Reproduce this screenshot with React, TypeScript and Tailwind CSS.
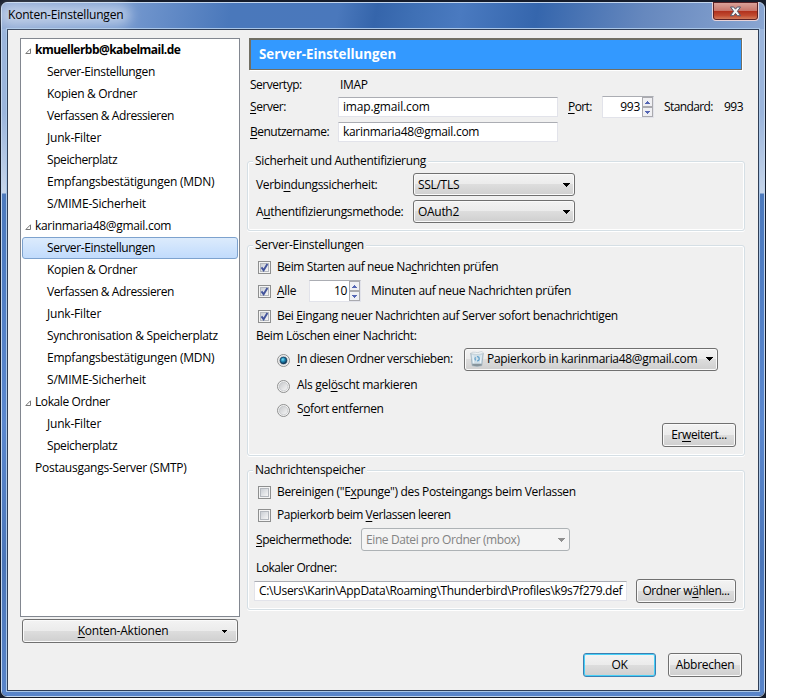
import type { ReactNode } from 'react';

interface TreeRow {
  label: string;
  level: 0 | 1;
  open?: boolean;
  bold?: boolean;
  selected?: boolean;
  tracking?: string;
}

const rows: TreeRow[] = [
  { label: 'kmuellerbb@kabelmail.de', level: 0, open: true, bold: true, tracking: 'tracking-[-0.53px]' },
  { label: 'Server-Einstellungen', level: 1, tracking: 'tracking-[-0.35px]' },
  { label: 'Kopien & Ordner', level: 1 },
  { label: 'Verfassen & Adressieren', level: 1, tracking: 'tracking-[-0.43px]' },
  { label: 'Junk-Filter', level: 1, tracking: 'tracking-[-0.2px]' },
  { label: 'Speicherplatz', level: 1, tracking: 'tracking-[-0.4px]' },
  { label: 'Empfangsbestätigungen (MDN)', level: 1, tracking: 'tracking-[-0.25px]' },
  { label: 'S/MIME-Sicherheit', level: 1, tracking: 'tracking-[-0.2px]' },
  { label: 'karinmaria48@gmail.com', level: 0, open: true },
  { label: 'Server-Einstellungen', level: 1, selected: true, tracking: 'tracking-[-0.35px]' },
  { label: 'Kopien & Ordner', level: 1 },
  { label: 'Verfassen & Adressieren', level: 1, tracking: 'tracking-[-0.43px]' },
  { label: 'Junk-Filter', level: 1, tracking: 'tracking-[-0.2px]' },
  { label: 'Synchronisation & Speicherplatz', level: 1 },
  { label: 'Empfangsbestätigungen (MDN)', level: 1, tracking: 'tracking-[-0.25px]' },
  { label: 'S/MIME-Sicherheit', level: 1, tracking: 'tracking-[-0.2px]' },
  { label: 'Lokale Ordner', level: 0, open: true, tracking: 'tracking-[-0.4px]' },
  { label: 'Junk-Filter', level: 1, tracking: 'tracking-[-0.2px]' },
  { label: 'Speicherplatz', level: 1, tracking: 'tracking-[-0.4px]' },
  { label: 'Postausgangs-Server (SMTP)', level: 0, tracking: 'tracking-[-0.25px]' },
];

// Access key letter
function K({ children }: { children: ReactNode }) {
  return <span className="underline decoration-1 underline-offset-2 [text-decoration-skip-ink:none]">{children}</span>;
}

function TreeItem({ row }: { row: TreeRow }) {
  return (
    <div
      className={`flex h-[22px] items-center rounded-[3px] border ${
        row.selected ? 'border-[#7da2ce] bg-linear-to-b from-[#dcebfc] to-[#c1dbfc]' : 'border-transparent'
      } ${row.level === 1 ? 'pl-6' : 'pl-[2px]'}`}
    >
      {row.level === 0 && (
        <span className="flex w-[10px] shrink-0">
          {row.open && (
            <svg width="7" height="7" viewBox="0 0 7 7" className="mt-[3px]">
              <path d="M5.5 .8V5.5H.8Z" fill="#fff" stroke="#777" strokeWidth="1" />
            </svg>
          )}
        </span>
      )}
      <span className={`whitespace-nowrap ${row.bold ? 'font-bold' : ''} ${row.tracking ?? ''}`}>{row.label}</span>
    </div>
  );
}

function Button({ children, className = '', primary = false }: { children: ReactNode; className?: string; primary?: boolean }) {
  return (
    <button
      type="button"
      className={`flex h-6 shrink-0 items-center justify-center whitespace-nowrap rounded-[3px] border bg-[linear-gradient(#f3f3f3,#ebebeb_50%,#dddddd_50%,#cfcfcf)] ${
        primary ? 'border-[#3c7fb1] shadow-[inset_0_0_0_1px_#46d0f8]' : 'border-[#707070] shadow-[inset_0_0_0_1px_#fafafa]'
      } ${className}`}
    >
      {children}
    </button>
  );
}

function Arrow({ color = '#000' }: { color?: string }) {
  return (
    <svg width="7" height="4" viewBox="0 0 7 4" className="ml-auto shrink-0" shapeRendering="crispEdges">
      <path d="M0 0H7V1H6V2H5V3H4V4H3V3H2V2H1V1H0Z" fill={color} />
    </svg>
  );
}

function Combo({ children, className = '', disabled = false }: { children: ReactNode; className?: string; disabled?: boolean }) {
  return (
    <div
      className={`flex h-[23px] shrink-0 items-center whitespace-nowrap rounded-[3px] border pl-1 pr-1 ${
        disabled
          ? 'border-[#adb2b5] bg-[#f4f4f4] text-[#838383]'
          : 'border-[#707070] bg-[linear-gradient(#f3f3f3,#ebebeb_50%,#dddddd_50%,#cfcfcf)] shadow-[inset_0_0_0_1px_#fafafa]'
      } ${className}`}
    >
      {children}
      <Arrow color={disabled ? '#8f8f8f' : '#000'} />
    </div>
  );
}

function TextBox({ value, className = '' }: { value: string; className?: string }) {
  return (
    <div
      className={`flex h-5 shrink-0 items-center overflow-hidden whitespace-nowrap border border-[#e2e3ea] border-t-[#abadb3] bg-white pl-1 ${className}`}
    >
      {value}
    </div>
  );
}

function Spinner({ value, className = '' }: { value: string; className?: string }) {
  return (
    <div className={`flex h-[22px] shrink-0 border border-[#e2e3ea] border-t-[#abadb3] bg-white ${className}`}>
      <span className="flex flex-1 items-center justify-end pr-[2px]">{value}</span>
      <div className="flex w-[11px] flex-col">
        {['M0 3H5V2H4V1H3V0H2V1H1V2H0Z', 'M0 0H5V1H4V2H3V3H2V2H1V1H0Z'].map((d) => (
          <span key={d} className="flex flex-1 items-center justify-center border border-[#aaaaaf] bg-[#f0f0f3]">
            <svg width="5" height="3" viewBox="0 0 5 3" shapeRendering="crispEdges">
              <path d={d} fill="#5566b4" />
            </svg>
          </span>
        ))}
      </div>
    </div>
  );
}

function Check({ checked, children }: { checked?: boolean; children: ReactNode }) {
  return (
    <label className="flex h-4 items-center whitespace-nowrap">
      <span className="mr-1.5 flex size-[13px] shrink-0 items-center justify-center border border-[#8e8f8f] bg-[#f4f4f4]">
        <span className="flex size-[9px] items-center justify-center border border-[#b4b8be] bg-linear-to-br from-[#cbcfd5] to-[#f6f6f6]">
          {checked && (
            <svg width="9" height="9" viewBox="0 0 9 9" className="shrink-0">
              <path d="M1.5 4.4 3.6 7.2 7.4 .9" fill="none" stroke="#43549c" strokeWidth="1.9" />
            </svg>
          )}
        </span>
      </span>
      {children}
    </label>
  );
}

function Radio({ checked, children }: { checked?: boolean; children: ReactNode }) {
  return (
    <label className="flex h-4 items-center whitespace-nowrap">
      <svg width="13" height="13" viewBox="0 0 13 13" className="-ml-px mr-[7px] mt-[2px] shrink-0">
        <defs>
          <radialGradient id="dot" cx=".4" cy=".35" r=".65">
            <stop offset="0" stopColor="#7fe0f5" />
            <stop offset=".45" stopColor="#1f8bb8" />
            <stop offset="1" stopColor="#0b2a4a" />
          </radialGradient>
          <linearGradient id="well" x1="0" y1="0" x2="1" y2="1">
            <stop offset="0" stopColor="#c4c6c9" />
            <stop offset="1" stopColor="#f8f8f8" />
          </linearGradient>
        </defs>
        <circle cx="6.5" cy="6.5" r="6" fill="#f4f4f4" stroke="#8e8f8f" />
        <circle cx="6.5" cy="6.5" r="4.3" fill="url(#well)" stroke="#b9bcc0" strokeWidth=".6" />
        {checked && <circle cx="6.5" cy="6.5" r="3.4" fill="url(#dot)" stroke="#0e3a5c" strokeWidth=".7" />}
      </svg>
      {children}
    </label>
  );
}

function Group({ title, className = '', children }: { title: string; className?: string; children: ReactNode }) {
  return (
    <fieldset
      className={`w-[498px] rounded-[3px] border border-[#d5dfe5] shadow-[inset_0_0_0_1px_#fff,0_1px_0_#fff] ${className}`}
    >
      <legend className="ml-[5px] h-4 whitespace-nowrap bg-[#f0f0f0] px-[2px] leading-4">{title}</legend>
      {children}
    </fieldset>
  );
}

function TrashIcon() {
  return (
    <svg width="16" height="16" viewBox="0 0 16 16" className="mr-[2px] shrink-0">
      <path d="M1.8 2.5 3.2 14.6Q8 16 12.8 14.6L14.2 2.5Z" fill="#cfdfe8" stroke="#9aafbb" strokeWidth=".8" />
      <path d="M3.2 12.8h9.6l-.2 1.8q-4.6 1.4-9.2 0Z" fill="#87949b" />
      <path d="M1 2.6Q4 .4 6.5 1.3T11 .9T15 2.6Q8 4.2 1 2.6Z" fill="#f3f7f9" stroke="#b3bfc6" strokeWidth=".6" />
      <path d="M3.8 4.2 4.8 12.3M12.2 4.2 11.3 12.3" stroke="#edf5f9" strokeWidth="1" />
      <circle cx="8.1" cy="7.8" r="2.1" fill="none" stroke="#5f9fca" strokeWidth="1.2" strokeDasharray="3 1.4" />
    </svg>
  );
}

function TitleBar() {
  return (
    <div className="flex h-[26px] items-start justify-between pl-1.5 pr-[5px]">
      <span className="relative mt-1 whitespace-nowrap tracking-[-0.2px]">
        <span className="absolute -inset-x-2 -inset-y-0.5 rounded-full bg-white/45 blur-[6px]" />
        <span className="relative">Konten-Einstellungen</span>
      </span>
      <button
        type="button"
        aria-label="Schließen"
        className="-mt-px flex h-[19px] w-[47px] items-center justify-center rounded-b-[4px] border border-t-0 border-[#e8d3d8] bg-[linear-gradient(#dda79f,#c9766b_48%,#b02f1c_50%,#c14a30_75%,#d88a68)] shadow-[inset_0_0_0_1px_#5b2226]"
      >
        <svg width="13" height="11" viewBox="0 0 13 11">
          <path
            d="M1.5 1H4.7L6.5 3.2 8.3 1H11.5L8.4 5.3 11.6 9.7H8.3L6.5 7.4 4.7 9.7H1.4L4.6 5.3Z"
            fill="#f7f7f7"
            stroke="#4e566b"
            strokeWidth="1"
          />
        </svg>
      </button>
    </div>
  );
}

export default function App() {
  return (
    <div className="h-[698px] w-[800px] overflow-hidden bg-white font-['Open_Sans','Noto_Sans',sans-serif] text-[12px] leading-4 tracking-[-0.3px] text-black">
      <div className="h-[698px] w-[766px] bg-[#151c2b] p-px pt-[2px]">
        <div className="h-[695px] rounded-[6px] border border-[#c3d6ee] bg-[linear-gradient(100deg,#90aad4_0,#7c9ed2_14%,#4a78bb_30%,#4a78bc_44%,#3565ab_49%,#3f70b5_54%,#4a7ac0_60%,#3566ad_70%,#6688be_84%,#8aa6d2_100%)] bg-[length:100%_28px] bg-no-repeat">
          <div className="h-full rounded-[5px] bg-[linear-gradient(transparent_26px,#9bb5dc_26px,#9bb5dc_110px,#c6d5ea_190px,#4d7abd_191px,#4f7dc3_260px,#5b88cf_420px,#4b76b9_560px,#5985ca)]">
            <TitleBar />
            <div className="mx-1 -mt-px h-[664px] border border-[#a9c6e8] bg-[#f0f0f0]">
              <div className="flex h-[662px] border border-[#2f3e57]">
                {/* Account tree */}
                <div className="ml-3 mt-2 w-[220px]">
                  <div className="h-[579px] border border-[#828790] bg-white px-px">
                    {rows.map((row, i) => (
                      <TreeItem key={i} row={row} />
                    ))}
                  </div>
                  <Button className="relative mt-[2px] ml-[2px] w-[216px]">
                    <span className="-ml-[14px] tracking-[-0.23px]">
                      <K>K</K>onten-Aktionen
                    </span>
                    <svg width="5" height="3" viewBox="0 0 5 3" className="absolute right-[10px]" shapeRendering="crispEdges">
                      <path d="M0 0H5V1H4V2H3V3H2V2H1V1H0Z" />
                    </svg>
                  </Button>
                </div>

                {/* Server settings */}
                <div className="ml-[7px] mt-2 w-[498px]">
                  <div className="ml-[2px] flex h-8 w-[493px] items-center border border-[#716f64] bg-[#3399ff] pl-[9px] text-[13.3px] font-bold tracking-[0px] text-white shadow-[1px_1px_0_#fff,inset_1px_1px_0_#716f64]">
                    Server-Einstellungen
                  </div>
                  <div className="mt-[7px] ml-[3px] flex h-4">
                    <span className="w-[90px] tracking-[-0.5px]">Servertyp:</span>
                    <span>IMAP</span>
                  </div>
                  <div className="mt-[3px] ml-[3px] flex h-[22px] items-center">
                    <span className="w-[88px] tracking-[-0.45px]">
                      <K>S</K>erver:
                    </span>
                    <TextBox value="imap.gmail.com" className="w-[220px] tracking-[-0.16px]" />
                    <span className="ml-[10px] w-[34px] tracking-[-0.6px]">
                      <K>P</K>ort:
                    </span>
                    <Spinner value="993" className="w-[52px]" />
                    <span className="ml-[10px] w-[60px] tracking-[-0.6px]">Standard:</span>
                    <span className="tracking-[-0.5px]">993</span>
                  </div>
                  <div className="mt-[3px] ml-[3px] flex h-[22px] items-center">
                    <span className="w-[88px] tracking-[-0.52px]">
                      <K>B</K>enutzername:
                    </span>
                    <TextBox value="karinmaria48@gmail.com" className="w-[220px]" />
                  </div>

                  <Group title="Sicherheit und Authentifizierung" className="mt-[10px] h-[78px]">
                    <div className="mt-1 ml-2 flex items-center">
                      <span className="w-[157px] tracking-[-0.34px]">
                        Verbi<K>n</K>dungssicherheit:
                      </span>
                      <Combo className="w-[162px]">SSL/TLS</Combo>
                    </div>
                    <div className="mt-1 ml-2 flex items-center">
                      <span className="w-[157px] tracking-[-0.34px]">
                        A<K>u</K>thentifizierungsmethode:
                      </span>
                      <Combo className="w-[162px]">OAuth2</Combo>
                    </div>
                  </Group>

                  <Group title="Server-Einstellungen" className="mt-[6px] h-[219px]">
                    <div className="mt-[6px] ml-[10px]">
                      <Check checked>
                        <span className="tracking-[-0.4px]">
                          Beim Starten auf neue Na<K>c</K>hrichten prüfen
                        </span>
                      </Check>
                    </div>
                    <div className="mt-[5px] ml-[10px] flex h-[22px] items-center">
                      <span className="w-[51px]">
                        <Check checked>
                          <span>
                            <K>A</K>lle
                          </span>
                        </Check>
                      </span>
                      <Spinner value="10" className="w-[52px]" />
                      <span className="ml-[10px] tracking-[-0.33px]">Minuten auf neue Nachrichten prüfen</span>
                    </div>
                    <div className="mt-[6px] ml-[10px]">
                      <Check checked>
                        <span className="tracking-[-0.34px]">
                          Bei <K>E</K>ingang neuer Nachrichten auf Server sofort benachrichtigen
                        </span>
                      </Check>
                    </div>
                    <div className="mt-1 ml-2 tracking-[-0.34px]">Beim Löschen einer Nachricht:</div>
                    <div className="mt-[3px] ml-[30px] flex h-6 items-center">
                      <span className="w-[186px]">
                        <Radio checked>
                          <span className="tracking-[-0.44px]">
                            <K>I</K>n diesen Ordner verschieben:
                          </span>
                        </Radio>
                      </span>
                      <Combo className="h-6 w-[254px]">
                        <TrashIcon />
                        Papierkorb in karinmaria48@gmail.com
                      </Combo>
                    </div>
                    <div className="mt-[6px] ml-[30px]">
                      <Radio>
                        <span>
                          Als gel<K>ö</K>scht markieren
                        </span>
                      </Radio>
                    </div>
                    <div className="mt-2 ml-[30px]">
                      <Radio>
                        <span className="tracking-[-0.4px]">
                          S<K>o</K>fort entfernen
                        </span>
                      </Radio>
                    </div>
                    <div className="mt-[6px] mr-2 flex justify-end">
                      <Button className="w-[74px]">
                        <span className="tracking-[-0.4px]">
                          Er<K>w</K>eitert...
                        </span>
                      </Button>
                    </div>
                  </Group>

                  <Group title="Nachrichtenspeicher" className="mt-[6px] h-[148px]">
                    <div className="mt-[6px] ml-[10px]">
                      <Check>
                        <span className="tracking-[-0.34px]">
                          Bereinigen ("E<K>x</K>punge") des Posteingangs beim Verlassen
                        </span>
                      </Check>
                    </div>
                    <div className="mt-[7px] ml-[10px]">
                      <Check>
                        <span className="tracking-[-0.47px]">
                          Papierkorb beim <K>V</K>erlassen leeren
                        </span>
                      </Check>
                    </div>
                    <div className="mt-[5px] ml-2 flex items-center">
                      <span className="w-[105px] tracking-[-0.43px]">
                        <K>S</K>peichermethode:
                      </span>
                      <Combo disabled className="w-[209px] tracking-[-0.4px]">
                        Eine Datei pro Ordner (mbox)
                      </Combo>
                    </div>
                    <div className="mt-[9px] ml-2 tracking-[-0.48px]">Lokaler Ordner:</div>
                    <div className="mt-[3px] mr-2 ml-1.5 flex items-center justify-between">
                      <TextBox
                        value="C:\Users\Karin\AppData\Roaming\Thunderbird\Profiles\k9s7f279.def"
                        className="w-[373px] tracking-[-0.33px]"
                      />
                      <Button className="w-[100px]">
                        <span className="tracking-[-0.4px]">
                          Ordner w<K>ä</K>hlen...
                        </span>
                      </Button>
                    </div>
                  </Group>

                  <div className="mt-[43px] mr-[3px] flex justify-end gap-3">
                    <Button primary className="w-[73px]">
                      OK
                    </Button>
                    <Button className="w-[74px]">Abbrechen</Button>
                  </div>
                </div>
              </div>
            </div>
          </div>
        </div>
      </div>
    </div>
  );
}
